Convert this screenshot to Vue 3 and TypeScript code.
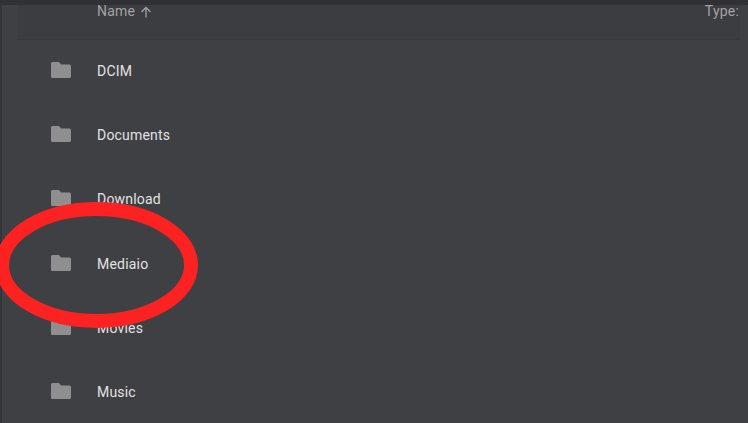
<script setup lang="ts">
const folders: string[] = ['DCIM', 'Documents', 'Download', 'Mediaio', 'Movies', 'Music']
</script>

<template>
  <div class="screen">
    <div class="topbar"></div>
    <div class="body">
      <div class="rail"></div>
      <main class="panel">
        <header class="head">
          <div class="name-col">
            <span>Name</span>
            <svg class="arrow" viewBox="0 0 12 12" width="12" height="12" aria-hidden="true">
              <path d="M6 11.500V1.500M1.500 6l4.500-4.500L10.500 6" fill="none" stroke="#a2a3a5" stroke-width="1.300" />
            </svg>
          </div>
          <span class="type">Type:</span>
        </header>
        <ul class="list">
          <li v-for="f in folders" :key="f" class="row">
            <svg class="folder" viewBox="0 0 20 16" width="20" height="16" aria-hidden="true">
              <path d="M1.500 0H8l2 2.400h8.500A1.500 1.500 0 0 1 20 3.900V14.500A1.500 1.500 0 0 1 18.500 16H1.500A1.500 1.500 0 0 1 0 14.500V1.500A1.500 1.500 0 0 1 1.500 0Z" fill="#8f8f90" />
            </svg>
            <span class="label">{{ f }}</span>
          </li>
        </ul>
      </main>
    </div>
    <svg class="mark" viewBox="0 0 748 423" width="748" height="423" aria-hidden="true">
      <ellipse cx="96.500" cy="265" rx="94.500" ry="56" fill="none" stroke="#fb2221" stroke-width="14" />
    </svg>
  </div>
</template>

<style scoped>
.screen {
  position: relative;
  width: 748px;
  height: 423px;
  overflow: hidden;
  background: #3f4044;
  font-family: Roboto, "Liberation Sans", sans-serif;
  display: flex;
  flex-direction: column;
}
.topbar {
  height: 5px;
  flex: none;
  background: #2f3134;
}
.body {
  flex: 1;
  display: flex;
  min-height: 0;
}
.rail {
  width: 2px;
  flex: none;
  background: #333538;
}
.panel {
  flex: 1;
  min-width: 0;
  display: flex;
  flex-direction: column;
  padding-right: 8px;
}
.head {
  height: 35px;
  flex: none;
  margin-left: 16px;
  box-sizing: border-box;
  padding: 0 1px 0 79px;
  display: flex;
  justify-content: space-between;
  align-items: flex-start;
  background: #3c3d41;
  border-bottom: 1px solid #38393c;
  color: #a2a3a5;
  font-size: 14px;
  line-height: 13px;
}
.name-col {
  display: flex;
  align-items: center;
  gap: 5px;
  letter-spacing: 0.2px;
}
.arrow {
  display: block;
}
.type {
  letter-spacing: 0.2px;
}
.list {
  list-style: none;
  margin: -1px 0 0;
  padding: 0;
}
.row {
  height: 64.200px;
  display: flex;
  align-items: center;
  padding-left: 49px;
  gap: 26px;
}
.folder {
  flex: none;
  display: block;
  margin-top: -2px;
}
.label {
  color: #e2e2e3;
  font-size: 14px;
  letter-spacing: 0.2px;
}
.mark {
  position: absolute;
  inset: 0;
  pointer-events: none;
}
</style>
